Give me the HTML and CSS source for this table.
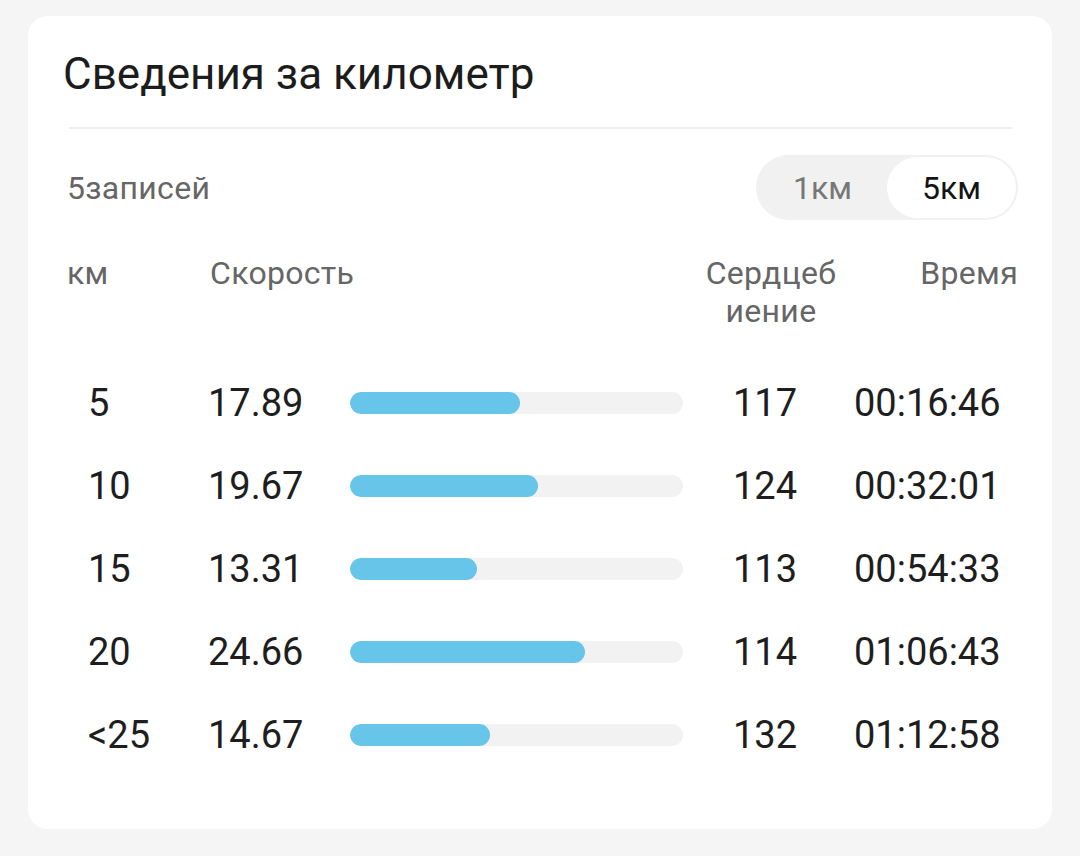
FILE: index.html
```html
<!DOCTYPE html>
<html lang="ru">
<head>
<meta charset="utf-8">
<title>Сведения за километр</title>
<link rel="stylesheet" href="styles.css">
</head>
<body>
<div class="card">
  <h1 class="title">Сведения за километр</h1>
  <div class="divider"></div>
  <div class="toolbar">
    <span class="count">5записей</span>
    <div class="segment">
      <span class="seg-item">1км</span>
      <span class="seg-item active">5км</span>
    </div>
  </div>
  <div class="head">
    <span class="h-km">км</span>
    <span class="h-speed">Скорость</span>
    <span class="h-heart">Сердцебиение</span>
    <span class="h-time">Время</span>
  </div>
  <div class="rows">
    <div class="row">
      <span class="c-km">5</span><span class="c-speed">17.89</span>
      <div class="track"><div class="fill" style="width:51%"></div></div>
      <span class="c-heart">117</span><span class="c-time">00:16:46</span>
    </div>
    <div class="row">
      <span class="c-km">10</span><span class="c-speed">19.67</span>
      <div class="track"><div class="fill" style="width:56.5%"></div></div>
      <span class="c-heart">124</span><span class="c-time">00:32:01</span>
    </div>
    <div class="row">
      <span class="c-km">15</span><span class="c-speed">13.31</span>
      <div class="track"><div class="fill" style="width:38.2%"></div></div>
      <span class="c-heart">113</span><span class="c-time">00:54:33</span>
    </div>
    <div class="row">
      <span class="c-km">20</span><span class="c-speed">24.66</span>
      <div class="track"><div class="fill" style="width:70.6%"></div></div>
      <span class="c-heart">114</span><span class="c-time">01:06:43</span>
    </div>
    <div class="row">
      <span class="c-km">&lt;25</span><span class="c-speed">14.67</span>
      <div class="track"><div class="fill" style="width:42%"></div></div>
      <span class="c-heart">132</span><span class="c-time">01:12:58</span>
    </div>
  </div>
</div>
</body>
</html>
```

FILE: styles.css
```css
* { box-sizing: border-box; }
html, body {
  margin: 0;
  padding: 0;
  background: #f5f5f5;
  font-family: Roboto, "Noto Sans", sans-serif;
}
body {
  padding: 16px 28px 0 28px;
}
.card {
  background: #ffffff;
  border-radius: 20px;
  height: 813px;
  padding: 32px 38px 0 40px;
}
.title {
  margin: 0 0 0 -5px;
  font-size: 44px;
  font-weight: 400;
  line-height: 53px;
  color: #1c1c1c;
}
.divider {
  height: 2px;
  background: #eeeeee;
  margin: 26px 2px 0 1px;
}
.toolbar {
  margin-top: 26px;
  height: 65px;
  display: flex;
  align-items: center;
  justify-content: space-between;
}
.count {
  font-size: 32px;
  letter-spacing: 0.3px;
  color: #666666;
  margin-left: -1px;
}
.segment {
  display: flex;
  align-items: center;
  height: 65px;
  width: 262px;
  margin-right: -4px;
  background: #f1f1f1;
  border-radius: 33px;
  padding: 2px;
}
.seg-item {
  flex: 1;
  height: 61px;
  display: flex;
  align-items: center;
  justify-content: center;
  font-size: 32px;
  color: #777777;
  border-radius: 31px;
}
.seg-item.active {
  background: #ffffff;
  color: #141414;
}
.head {
  margin-top: 34px;
  display: flex;
  align-items: flex-start;
  font-size: 32px;
  letter-spacing: 0.3px;
  line-height: 38px;
  color: #666666;
}
.h-km { width: 143px; margin-left: -1px; }
.h-speed { width: 491px; }
.h-heart {
  width: 140px;
  text-align: center;
  word-break: break-all;
}
.h-time {
  flex: 1;
  text-align: right;
  margin-right: -4px;
}
.rows {
  margin-top: 31px;
}
.row {
  height: 83px;
  display: flex;
  align-items: center;
  font-size: 38px;
  color: #1e1e1e;
}
.c-km { width: 140px; padding-left: 20px; }
.c-speed { width: 142px; }
.track {
  width: 333px;
  height: 22px;
  border-radius: 11px;
  background: #f2f2f2;
  overflow: hidden;
}
.fill {
  height: 100%;
  border-radius: 11px;
  background: #66c5e9;
}
.c-heart {
  width: 164px;
  text-align: center;
}
.c-time {
  margin-left: 7px;
}
```
